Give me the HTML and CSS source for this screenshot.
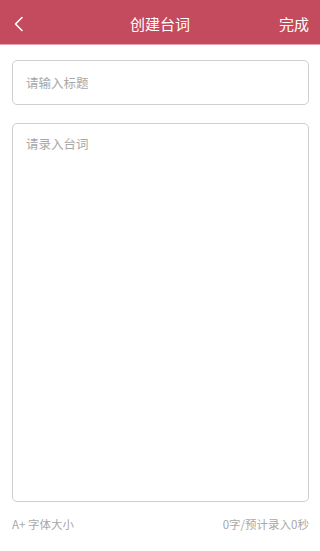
FILE: index.html
```html
<!DOCTYPE html>
<html>
<head>
<meta charset="utf-8">
<link rel="stylesheet" href="styles.css">
</head>
<body>
<div class="page">
  <header class="bar">
    <span class="back">
      <svg width="12" height="16" viewBox="0 0 12 16"><path d="M9 1.5 L2.5 8 L9 14.5" fill="none" stroke="#fff" stroke-width="1.6" stroke-linecap="round" stroke-linejoin="round"/></svg>
    </span>
    <span class="title">创建台词</span>
    <span class="done">完成</span>
  </header>
  <main class="content">
    <div class="field title-field"><span class="ph">请输入标题</span></div>
    <div class="field body-field"><span class="ph">请录入台词</span></div>
    <div class="foot">
      <span>A+ 字体大小</span>
      <span>0字/预计录入0秒</span>
    </div>
  </main>
</div>
</body>
</html>
```
FILE: styles.css
```css
html, body { margin: 0; padding: 0; background: #fff; }
body { font-family: "Noto Sans CJK SC", "Noto Sans", sans-serif; }
.page { width: 320px; height: 551px; display: flex; flex-direction: column; }
.bar {
  background: #c44a5e;
  border-bottom: 1.5px solid #e7a3ae;
  display: flex;
  align-items: center;
  justify-content: space-between;
  padding: 4px 11px 0 13px;
  box-sizing: content-box;
  height: 40px;
  position: relative;
  color: #fff;
}
.back { display: flex; align-items: center; width: 12px; height: 16px; }
.title {
  position: absolute; left: 0; right: 0; text-align: center;
  font-size: 15px; line-height: 20px; pointer-events: none;
}
.done { font-size: 15px; line-height: 20px; }
.content { flex: 1; display: flex; flex-direction: column; padding: 15px 11px 0 12px; }
.field {
  border: 1.5px solid #cfcfcf;
  border-radius: 5px;
  box-sizing: border-box;
}
.ph { color: #a8a8a8; font-size: 12.5px; }
.title-field { height: 45px; display: flex; align-items: center; padding-left: 13px; }
.body-field { margin-top: 18px; height: 379px; padding: 11px 13px; }
.body-field .ph { display: block; line-height: 18px; }
.foot {
  display: flex; justify-content: space-between;
  margin-top: 14px;
  color: #a8a8a8; font-size: 11.5px; line-height: 16px;
}
```
